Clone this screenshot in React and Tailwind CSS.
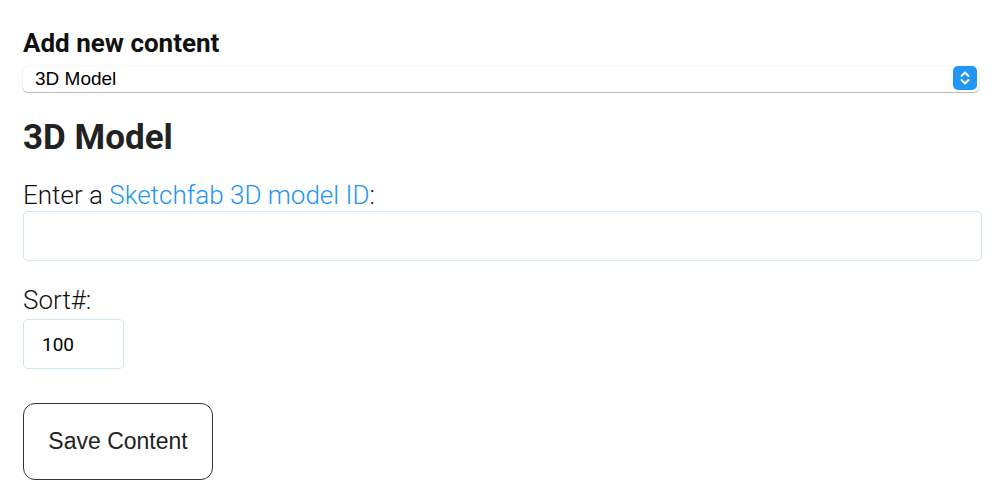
import React from 'react';

const App = () => {
    return (
        <div className="w-[1000px] h-[504px] bg-white px-[23px] pt-[27px] overflow-hidden">
            {/* Content type picker */}
            <h3 className="font-['Roboto',sans-serif] font-bold text-[26px] leading-[32px] text-[#111]">Add new content</h3>
            <div className="relative mt-[7px] w-[956px] h-[26px] rounded-[5px] bg-white shadow-[0_1px_1px_rgba(0,0,0,0.25),0_0_0_0.5px_rgba(0,0,0,0.06)] flex items-center">
                <span className="pl-[12px] font-['Liberation_Sans',sans-serif] text-[19px] text-black">3D Model</span>
                <div className="absolute right-[2px] top-[0px] w-[24px] h-[24px] rounded-[5px] bg-[#2196f3] flex items-center justify-center">
                    <svg width="12" height="16" viewBox="0 0 12 16" fill="none" stroke="white" strokeWidth="2" strokeLinecap="round" strokeLinejoin="round">
                        <path d="M2.5 6 L6 2.5 L9.5 6" />
                        <path d="M2.5 10 L6 13.5 L9.5 10" />
                    </svg>
                </div>
            </div>

            {/* Form */}
            <h2 className="mt-[25px] font-['Roboto',sans-serif] font-bold text-[35px] leading-[42px] text-[#222]">3D Model</h2>
            <label className="block mt-[21px] font-['Roboto',sans-serif] font-light text-[26px] leading-[31px] text-[#111]">
                Enter a <span className="text-[#2196f3]">Sketchfab 3D model ID</span>:
            </label>
            <input
                type="text"
                className="block mt-0 w-[959px] h-[50px] rounded-[5px] border border-[#cfe6f5] outline-none px-[18px]"
            />
            <label className="block mt-[24px] font-['Roboto',sans-serif] font-light text-[26px] leading-[31px] text-[#111]">Sort#:</label>
            <input
                type="text"
                defaultValue="100"
                className="block mt-[3px] w-[101px] h-[50px] rounded-[5px] border border-[#cfe6f5] outline-none pl-[18px] font-['Roboto',sans-serif] text-[19px] text-black"
            />
            <button className="block mt-[34px] w-[190px] h-[77px] rounded-[12px] border border-[#333] bg-white font-['Liberation_Sans',sans-serif] text-[23px] text-[#222]">
                Save Content
            </button>
        </div>
    );
};

export default App;
